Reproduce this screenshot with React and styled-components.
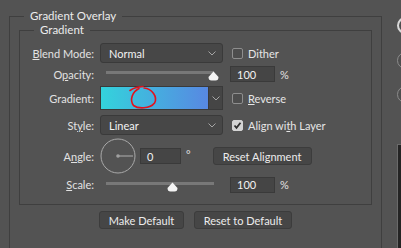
import React from 'react';
import styled, { createGlobalStyle } from 'styled-components';

const Global = createGlobalStyle`
  html, body { margin: 0; padding: 0; background: #535353; }
  body {
    font-family: Lato, "Liberation Sans", sans-serif;
    font-size: 11px;
    color: #e4e4e4;
  }
  * { box-sizing: border-box; }
`;

const Page = styled.div`
  display: flex;
  align-items: flex-start;
  width: 401px;
  height: 248px;
  overflow: hidden;
  padding: 9px 0 0 9px;
  gap: 15px;
`;

const Outer = styled.fieldset`
  flex: none;
  margin: 0;
  padding: 0 0 60px;
  width: 373px;
  min-width: 0;
  border: 1px solid #3f3f3f;
  border-bottom: none;
`;

const Inner = styled.fieldset`
  margin: 0 9px;
  padding: 0;
  min-width: 0;
  border: 1px solid #3f3f3f;
`;

const Legend = styled.legend`
  margin-left: 14px;
  padding: 0 6px;
  line-height: 14px;
  font-size: 11.5px;
  color: #ececec;
`;

const Body = styled.div`
  display: flex;
  flex-direction: column;
  padding: 5px 0 9px;
`;

const Row = styled.div`
  display: flex;
  align-items: center;
  height: ${p => p.$h}px;
`;

const Label = styled.div`
  width: 74px;
  margin-right: 6px;
  text-align: right;
  white-space: nowrap;
  color: #e2e2e2;
`;

const U = styled.span`
  text-decoration: underline;
  text-underline-offset: 1px;
`;

const Select = styled.div`
  width: 123px;
  height: 20px;
  display: flex;
  align-items: center;
  justify-content: space-between;
  padding: 0 6px 0 8px;
  background: #474747;
  border: 1px solid #3a3a3a;
  border-radius: 3px;
  color: #f2f2f2;
`;

const Chevron = () => (
  <svg width="8" height="5" viewBox="0 0 8 5">
    <polyline points="0.5,0.5 4,4 7.5,0.5" fill="none" stroke="#a5a5a5" strokeWidth="1" />
  </svg>
);

const CheckWrap = styled.label`
  display: flex;
  align-items: center;
  margin-left: 9px;
  gap: 5px;
  color: #e6e6e6;
`;

const Box = styled.span`
  width: 11px;
  height: 11px;
  border-radius: 2px;
  border: 1px solid ${p => (p.$on ? '#d4d4d4' : '#8e8e8e')};
  background: ${p => (p.$on ? '#d4d4d4' : '#4d4d4d')};
  display: flex;
  align-items: center;
  justify-content: center;
`;

const Check = ({ on, children }) => (
  <CheckWrap>
    <Box $on={on}>
      {on && (
        <svg width="9" height="9" viewBox="0 0 9 9">
          <polyline points="1.5,4.5 3.5,6.8 7.5,1.8" fill="none" stroke="#2f2f2f" strokeWidth="1.8" />
        </svg>
      )}
    </Box>
    <span>{children}</span>
  </CheckWrap>
);

const SliderArea = styled.div`
  width: 123px;
  margin-right: 7px;
  padding-left: 6px;
  display: flex;
  align-items: center;
  align-self: stretch;
`;

const Track = styled.div`
  position: relative;
  width: 108px;
  height: 3px;
  background: #787878;
  margin-top: ${p => p.$dy}px;
`;

const Thumb = styled.svg`
  position: absolute;
  top: 0;
  margin-left: -5px;
`;

const Slider = ({ pos, dy }) => (
  <SliderArea>
    <Track $dy={dy}>
      <Thumb style={{ left: pos }} width="11" height="10" viewBox="0 0 11 10">
        <path d="M5.5 0.5 L10.5 6 Q10.5 9.5 7.5 9.5 L3.5 9.5 Q0.5 9.5 0.5 6 Z" fill="#f4f4f4" />
      </Thumb>
    </Track>
  </SliderArea>
);

const Input = styled.div`
  width: ${p => p.$w}px;
  height: 16px;
  display: flex;
  align-items: center;
  padding-left: 6px;
  background: #454545;
  border: 1px solid #3a3a3a;
  color: #f2f2f2;
`;

const Unit = styled.span`
  margin-left: ${p => p.$ml}px;
  color: #e2e2e2;
  align-self: ${p => (p.$top ? 'flex-start' : 'center')};
  margin-top: ${p => (p.$top ? 10 : 0)}px;
`;

const GradBox = styled.div`
  width: 123px;
  height: 24px;
  display: flex;
  border: 1px solid #3a3a3a;
`;

const Swatch = styled.div`
  position: relative;
  flex: 1;
  background: linear-gradient(to right, #33d3dc, #5888e2);
`;

const Scribble = styled.svg`
  position: absolute;
  left: 0;
  top: -1px;
  overflow: visible;
`;

const GradArrow = styled.div`
  width: 14px;
  display: flex;
  align-items: center;
  justify-content: center;
  background: #454545;
  border-left: 1px solid #3a3a3a;
`;

const Dial = styled.svg`
  flex: none;
`;

const Button = styled.div`
  width: ${p => p.$w}px;
  height: 18px;
  display: flex;
  align-items: center;
  justify-content: center;
  margin-left: ${p => p.$ml || 0}px;
  background: #464646;
  border: 1px solid #3c3c3c;
  border-radius: 3px;
  color: #ececec;
  white-space: nowrap;
`;

const ButtonRow = styled.div`
  display: flex;
  justify-content: center;
  gap: 10px;
  margin-top: 6px;
`;

const Side = styled.div`
  flex: none;
  display: flex;
  flex-direction: column;
  padding-top: 8px;
`;

const SideButton = styled.div`
  width: 80px;
  height: 17px;
  border-radius: 9px;
  border: ${p => (p.$primary ? '2px solid #d8d8d8' : '1px solid #8c8c8c')};
  background: #4e4e4e;
  margin-bottom: ${p => p.$mb}px;
`;

const Preview = styled.div`
  width: 80px;
  height: 120px;
  background: #242424;
  border: 1px solid #6a6a6a;
`;

export default function App() {
  return (
    <>
      <Global />
      <Page>
        <Outer>
          <Legend>Gradient Overlay</Legend>
          <Inner>
            <Legend>Gradient</Legend>
            <Body>
              <Row $h={22}>
                <Label><U>B</U>lend Mode:</Label>
                <Select>
                  <span>Normal</span>
                  <Chevron />
                </Select>
                <Check>Dither</Check>
              </Row>
              <Row $h={20}>
                <Label>O<U>p</U>acity:</Label>
                <Slider pos={107} dy={-4} />
                <Input $w={45}>100</Input>
                <Unit $ml={5}>%</Unit>
              </Row>
              <Row $h={28}>
                <Label>Gradient:</Label>
                <GradBox>
                  <Swatch>
                    <Scribble width="110" height="24" viewBox="0 0 110 24">
                      <path d="M29 4.5 Q34 1 42 0.5" fill="none" stroke="#e3121c" strokeWidth="1.6" strokeLinecap="round" />
                      <path d="M38 2.5 C31 6 28.5 14 32.5 19.5 C37 23 49 23 53.5 17 C57 11 51 2.5 43 2" fill="none" stroke="#e3121c" strokeWidth="1.6" strokeLinecap="round" />
                    </Scribble>
                  </Swatch>
                  <GradArrow><Chevron /></GradArrow>
                </GradBox>
                <Check><U>R</U>everse</Check>
              </Row>
              <Row $h={26}>
                <Label>St<U>y</U>le:</Label>
                <Select>
                  <span>Linear</span>
                  <Chevron />
                </Select>
                <Check on>Align wi<U>t</U>h Layer</Check>
              </Row>
              <Row $h={36}>
                <Label>A<U>n</U>gle:</Label>
                <Dial width="36" height="36" viewBox="0 0 36 36">
                  <circle cx="18" cy="18" r="17" fill="none" stroke="#a9a9a9" strokeWidth="1" />
                  <line x1="18" y1="18" x2="33" y2="18" stroke="#a0a0a0" strokeWidth="1.2" />
                  <circle cx="18" cy="18" r="1.8" fill="#a0a0a0" />
                </Dial>
                <Input $w={41} style={{ marginLeft: 4 }}>0</Input>
                <Unit $ml={5} $top>°</Unit>
                <Button $w={99} $ml={22}>Reset Alignment</Button>
              </Row>
              <Row $h={21}>
                <Label><U>S</U>cale:</Label>
                <Slider pos={66} dy={-3} />
                <Input $w={45}>100</Input>
                <Unit $ml={5}>%</Unit>
              </Row>
            </Body>
          </Inner>
          <ButtonRow>
            <Button $w={85}>Make Default</Button>
            <Button $w={98}>Reset to Default</Button>
          </ButtonRow>
        </Outer>
        <Side>
          <SideButton $primary $mb={18} />
          <SideButton $mb={17} />
          <SideButton $mb={41} />
          <Preview />
        </Side>
      </Page>
    </>
  );
}
